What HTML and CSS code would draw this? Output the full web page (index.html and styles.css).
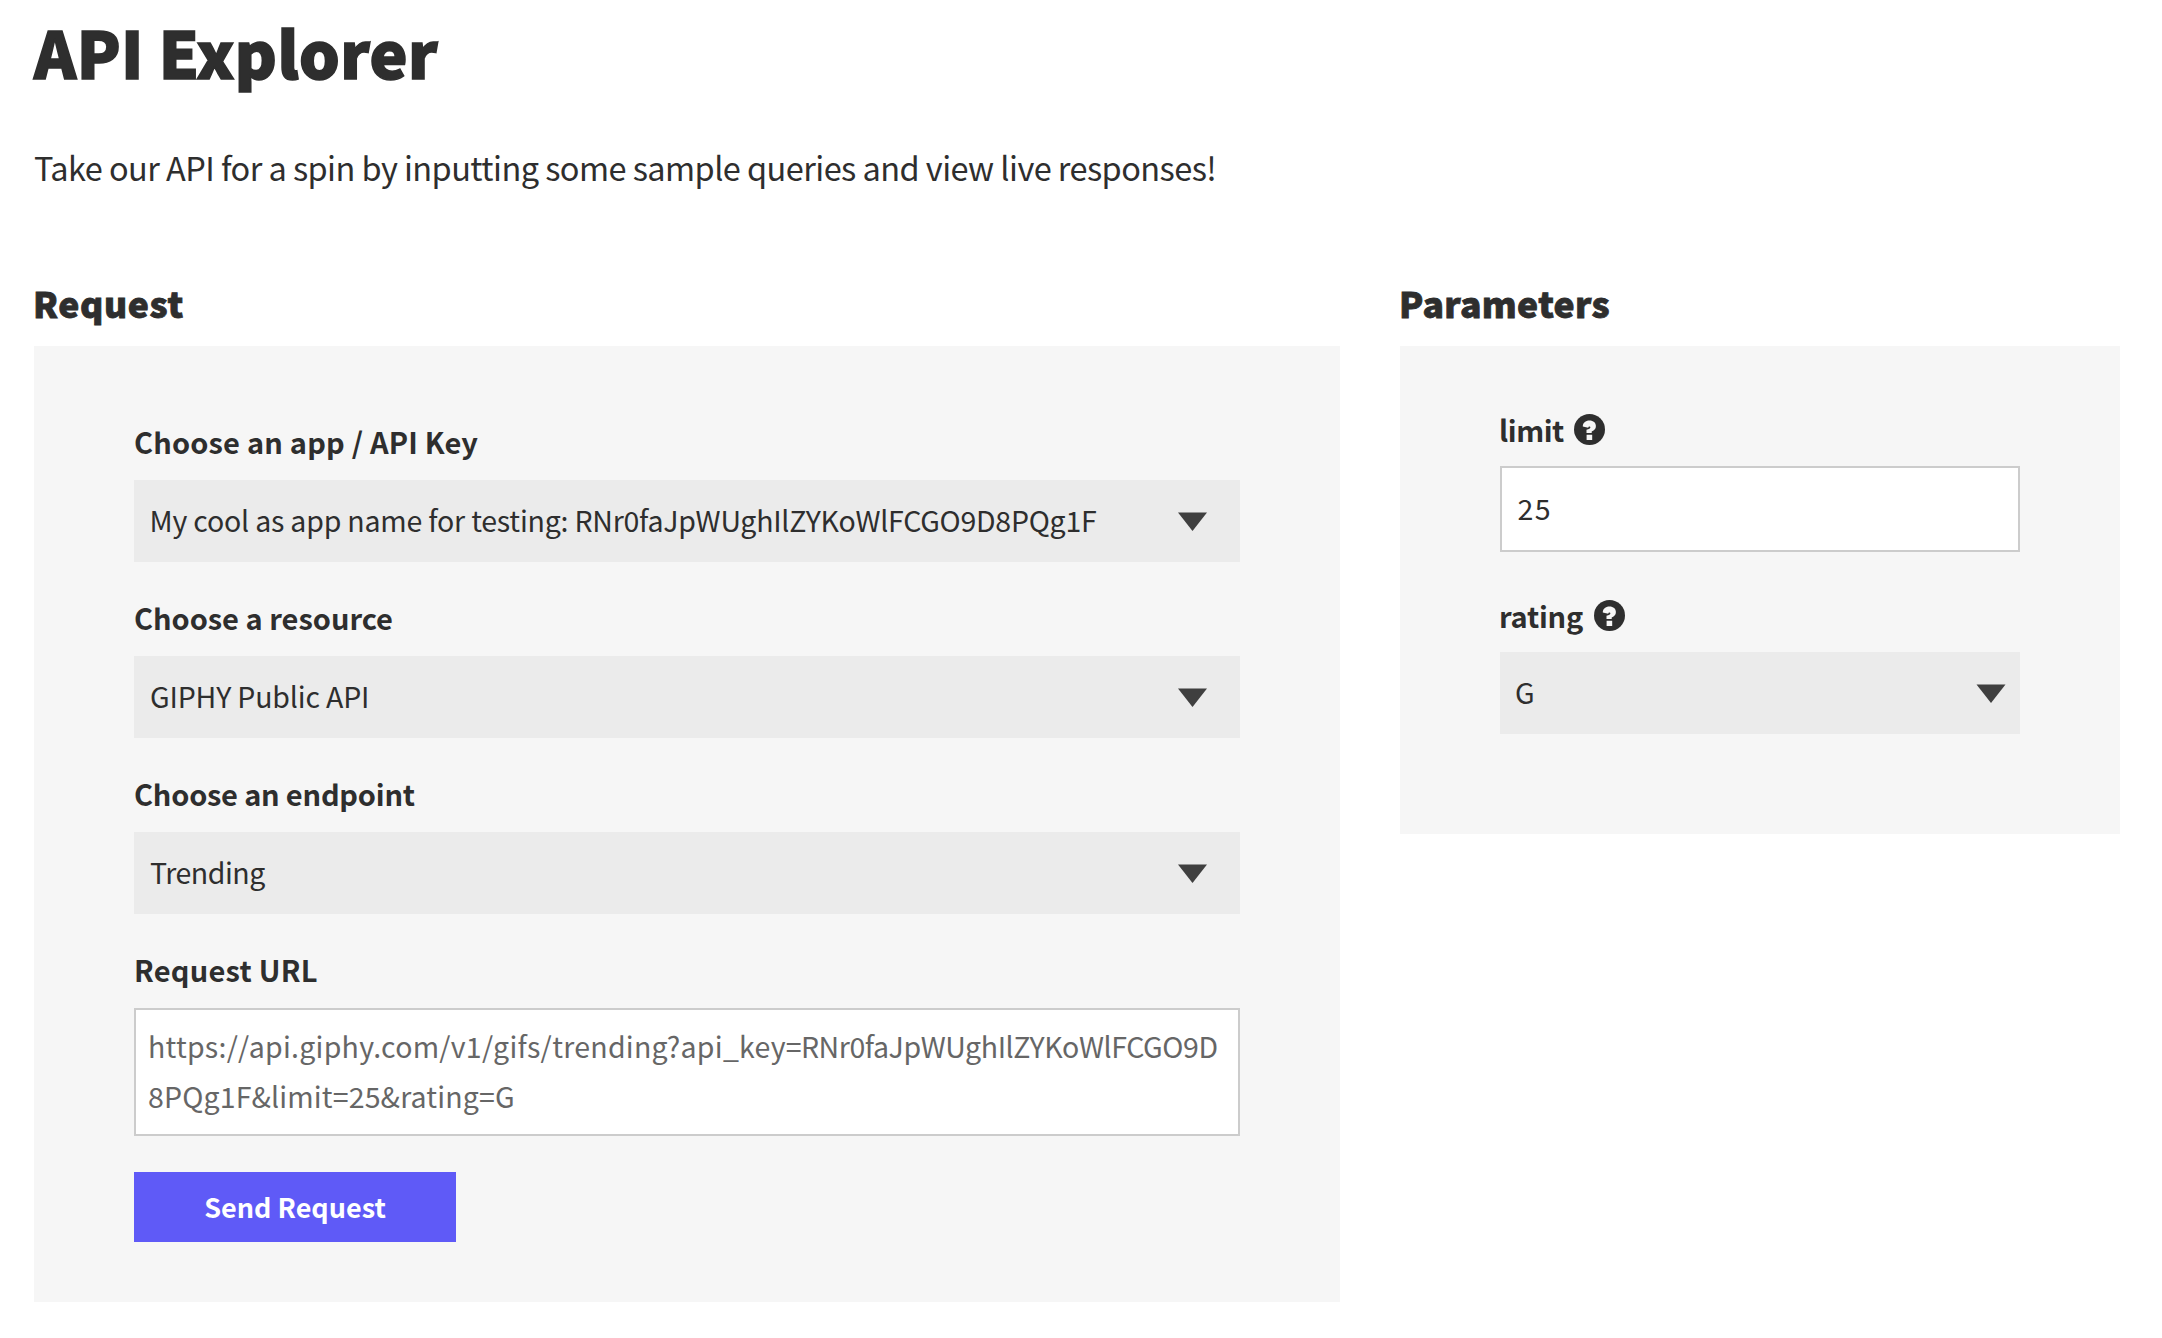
FILE: index.html
```html
<!DOCTYPE html>
<html lang="en">
<head>
<meta charset="utf-8">
<title>API Explorer</title>
<link rel="stylesheet" href="styles.css">
</head>
<body>
<main class="page">
  <h1 class="title">API Explorer</h1>
  <p class="intro">Take our API for a spin by inputting some sample queries and view live responses!</p>
  <div class="columns">
    <section class="request">
      <h2 class="heading heading-request">Request</h2>
      <div class="panel">
        <div class="field">
          <div class="label label-app">Choose an app / API Key</div>
          <div class="select select-app"><span>My cool as app name for testing: <span class="key">RNr0faJpWUghIlZYKoWlFCGO9D8PQg1F</span></span>
            <svg class="arrow" viewBox="0 0 29 19"><path d="M0 .5h29L14.5 19z"/></svg></div>
        </div>
        <div class="field">
          <div class="label">Choose a resource</div>
          <div class="select"><span>GIPHY Public API</span>
            <svg class="arrow" viewBox="0 0 29 19"><path d="M0 .5h29L14.5 19z"/></svg></div>
        </div>
        <div class="field">
          <div class="label label-endpoint">Choose an endpoint</div>
          <div class="select select-endpoint"><span>Trending</span>
            <svg class="arrow" viewBox="0 0 29 19"><path d="M0 .5h29L14.5 19z"/></svg></div>
        </div>
        <div class="field">
          <div class="label label-url">Request URL</div>
          <div class="url">https://api.giphy.com/v1/gifs/trending?api_key=<span class="url-key">RNr0faJpWUghIlZYKoWlFCGO9D</span><br><span class="url-rest">8PQg1F&amp;limit=25&amp;rating=G</span></div>
        </div>
        <button class="send" type="button">Send Request</button>
      </div>
    </section>
    <section class="parameters">
      <h2 class="heading heading-parameters">Parameters</h2>
      <div class="panel panel-parameters">
        <div class="field">
          <div class="label label-limit">limit
            <svg class="help" viewBox="0 0 31 31"><circle cx="15.5" cy="15.5" r="15.5"/><path d="M8.800 12.500C8.800 8.800 11.500 6.400 15.500 6.400c3.800 0 6.400 2.200 6.400 5.600 0 2.800-1.400 4.400-4.200 5.400v1.600h-5.200v-3.200c2.600-.6 3.900-1.400 3.900-2.500 0-.5-.4-.8-.9-.8-.7 0-1.100.5-1.300 1.300zM12.600 20.800h5.600v5.200h-5.600z"/></svg></div>
          <div class="input">25</div>
        </div>
        <div class="field">
          <div class="label label-rating">rating
            <svg class="help" viewBox="0 0 31 31"><circle cx="15.5" cy="15.5" r="15.5"/><path d="M8.800 12.500C8.800 8.800 11.500 6.400 15.500 6.400c3.800 0 6.400 2.200 6.400 5.600 0 2.800-1.400 4.400-4.200 5.400v1.600h-5.200v-3.200c2.600-.6 3.900-1.400 3.900-2.500 0-.5-.4-.8-.9-.8-.7 0-1.100.5-1.300 1.300zM12.600 20.800h5.600v5.200h-5.600z"/></svg></div>
          <div class="select select-rating"><span>G</span>
            <svg class="arrow" viewBox="0 0 29 19"><path d="M0 .5h29L14.5 19z"/></svg></div>
        </div>
      </div>
    </section>
  </div>
</main>
</body>
</html>
```
FILE: styles.css
```css
* { box-sizing: border-box; }
body {
  margin: 0;
  background: #fff;
  color: #2e2e2e;
  font-family: "Noto Sans CJK SC", "Noto Sans", sans-serif;
}
.page { padding: 11px 42px 36px 34px; }
.title {
  margin: 0;
  font-size: 64px;
  font-weight: 900;
  line-height: 80px;
  letter-spacing: 0.4px;
  -webkit-text-stroke: 1.6px #2e2e2e;
}
.intro { margin: 56px 0 0; font-size: 32.5px; line-height: 40px; letter-spacing: -0.56px; }
.columns {
  display: grid;
  grid-template-columns: 1306px 720px;
  column-gap: 60px;
  align-items: start;
  margin-top: 96px;
}
.heading {
  margin: 0 0 23px;
  font-size: 35.5px;
  font-weight: 900;
  line-height: 40px;
  text-indent: -1px;
  -webkit-text-stroke: 0.8px #2e2e2e;
}
.heading-request { letter-spacing: 0.6px; }
.heading-parameters { letter-spacing: 0.35px; }
.panel {
  display: flex;
  flex-direction: column;
  gap: 37px;
  padding: 77px 100px 60px;
  background: #f6f6f6;
}
.panel-parameters { gap: 45px; padding: 65px 100px 100px; }
.label {
  display: flex;
  align-items: center;
  margin-bottom: 21px;
  font-size: 29px;
  font-weight: 700;
  line-height: 36px;
}
.label-app { letter-spacing: 0.2px; }
.label-endpoint { letter-spacing: -0.2px; }
.label-url { letter-spacing: 0.25px; }
.label-limit, .label-rating { margin: 0 0 19px -1px; }
.label-limit { letter-spacing: -0.4px; }
.label-rating { letter-spacing: -0.2px; }
.help { width: 31px; height: 31px; margin: 0 0 0 10.5px; fill: #2e2e2e; }
.help path { fill: #f6f6f6; }
.select {
  display: flex;
  align-items: center;
  justify-content: space-between;
  height: 82px;
  padding: 0 33px 3px 16px;
  background: #ebebeb;
  font-size: 28.5px;
  line-height: 40px;
  letter-spacing: -0.16px;
  white-space: nowrap;
}
.select-app { padding-left: 15.5px; letter-spacing: -0.2px; }
.select-endpoint { letter-spacing: -0.45px; }
.key { letter-spacing: -0.26px; }
.arrow { width: 29px; height: 19px; margin-top: 3px; fill: #3f3f3f; }
.select-rating { padding-right: 14px; padding-left: 15px; }
.select-rating .arrow { width: 30px; }
.url, .input {
  border: 2px solid #ccc;
  background: #fff;
  font-size: 28.5px;
}
.url { height: 128px; padding: 11px 12px; color: #666; line-height: 50px; letter-spacing: 0.26px; white-space: nowrap; }
.url-key { margin-left: -1px; letter-spacing: -0.42px; }
.url-rest { letter-spacing: 0.15px; }
.input {
  display: flex;
  align-items: center;
  height: 86px;
  padding: 0 15.5px 3px;
  letter-spacing: 1.5px;
}
.send {
  width: 322px;
  height: 70px;
  margin-top: -1px;
  padding: 0 0 1px;
  border: 0;
  background: #5f5af7;
  color: #fff;
  font: 700 27px/40px "Noto Sans CJK SC", "Noto Sans", sans-serif;
}
```
